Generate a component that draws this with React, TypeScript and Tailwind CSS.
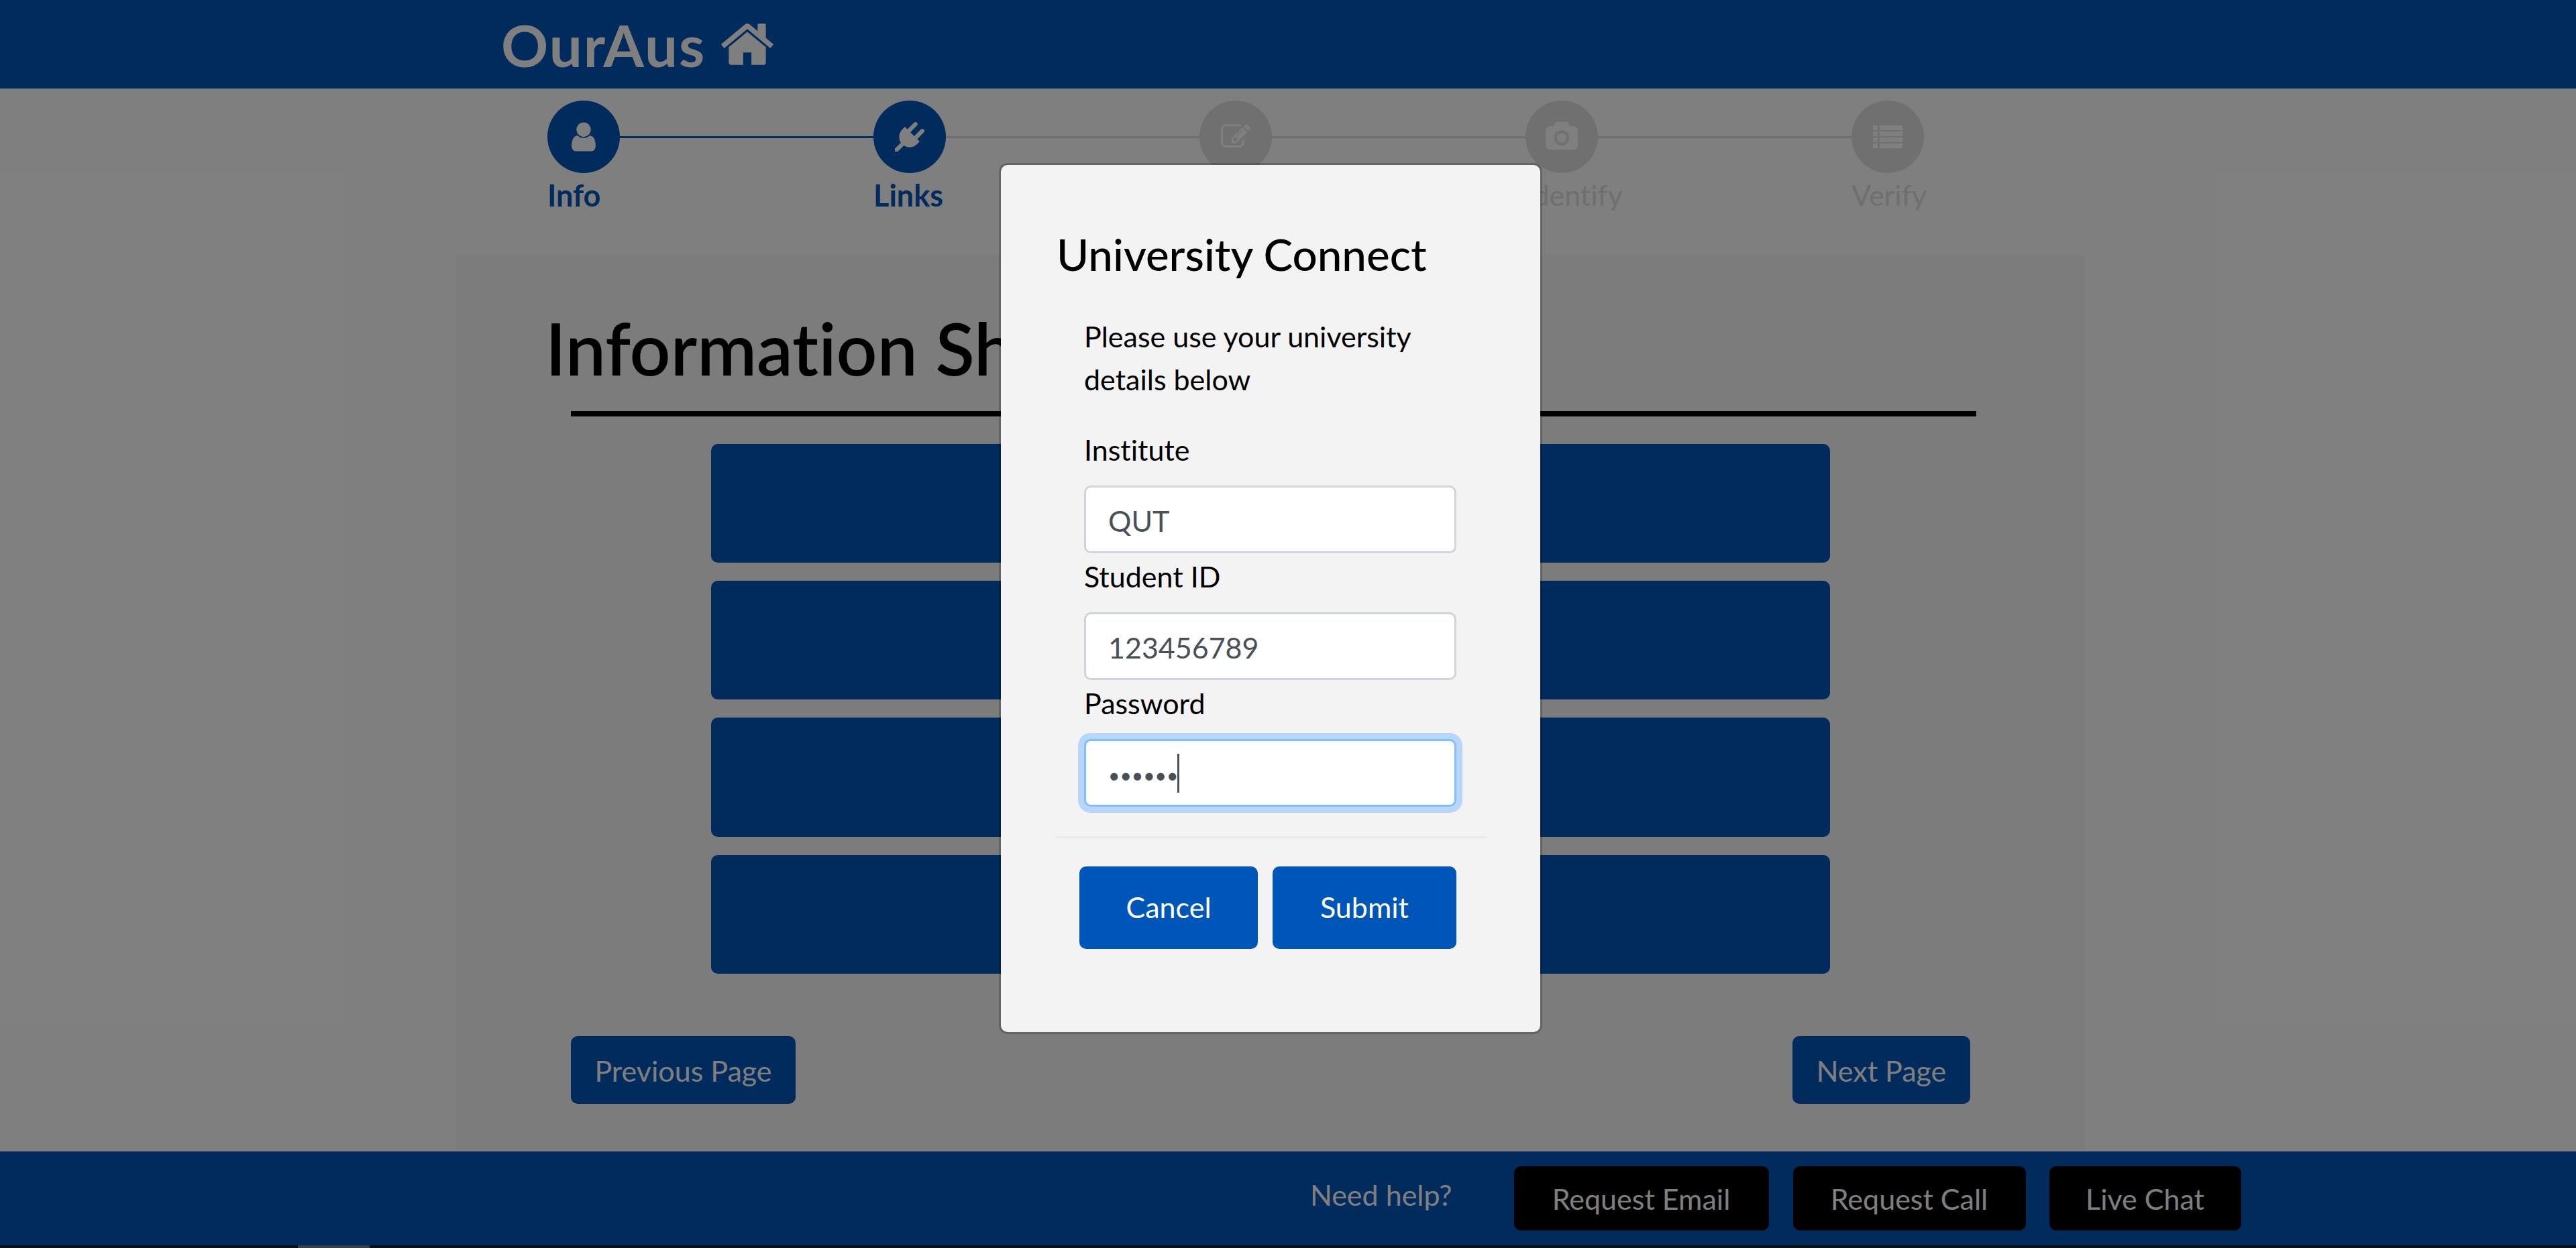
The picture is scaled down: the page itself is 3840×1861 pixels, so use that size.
const steps = [
  { label: "Info", icon: <UserIcon />, active: true },
  { label: "Links", icon: <PlugIcon />, active: true },
  { label: "Details", icon: <EditIcon />, active: false },
  { label: "Identify", icon: <CameraIcon />, active: false },
  { label: "Verify", icon: <ListIcon />, active: false },
];

function HomeIcon() {
  return (
    <svg viewBox="0 0 1792 1792" fill="currentColor" className="ml-[19px] h-[86px] w-[86px]">
      <path d="M1472 992v480q0 26-19 45t-45 19h-384v-384h-256v384h-384q-26 0-45-19t-19-45v-480q0-1 .5-3t.5-3l575-474 575 474q1 2 1 6zm223-69l-62 74q-8 9-21 11h-3q-13 0-21-7l-692-577-692 577q-12 8-24 7-13-2-21-11l-62-74q-8-10-7-23.500t11-21.500l719-599q32-26 76-26t76 26l244 204v-195q0-14 9-23t23-9h192q14 0 23 9t9 23v408l219 182q10 8 11 21.500t-7 23.500z" />
    </svg>
  );
}

function UserIcon() {
  return (
    <svg viewBox="0 0 1792 1792" fill="currentColor" className="h-[50px] w-[50px]">
      <path d="M1536 1399q0 109-62.500 187t-150.500 78h-854q-88 0-150.500-78t-62.500-187q0-85 8.500-160.500t31.500-152 58.500-131 94-89 134.500-34.500q131 128 313 128t313-128q76 0 134.500 34.500t94 89 58.500 131 31.500 152 8.500 160.500zm-256-887q0 159-112.500 271.500t-271.500 112.500-271.500-112.500-112.500-271.500 112.500-271.500 271.500-112.500 271.500 112.500 112.500 271.500z" />
    </svg>
  );
}

function PlugIcon() {
  return (
    <svg viewBox="0 0 1792 1792" fill="currentColor" className="h-[44px] w-[44px]">
      <path d="M1755 453q37 38 37 90.500t-37 90.500l-401 400 150 150-160 160q-163 163-389.500 186.500t-411.500-100.500l-362 362h-181v-181l362-362q-124-185-100.500-411.500t186.500-389.500l160-160 150 150 400-401q38-37 91-37t90 37 37 90.500-37 90.500l-400 401 234 234 401-400q38-37 91-37t90 37z" />
    </svg>
  );
}

function EditIcon() {
  return (
    <svg viewBox="0 0 1792 1792" fill="currentColor" className="h-[44px] w-[44px]">
      <path d="M888 1184l116-116-152-152-116 116v56h96v96h56zm440-720q-16-16-33 1l-350 350q-17 17-1 33t33-1l350-350q17-17 1-33zm80 594v190q0 119-84.500 203.500t-203.500 84.500h-832q-119 0-203.500-84.500t-84.500-203.500v-832q0-119 84.500-203.500t203.500-84.500h832q63 0 117 25 15 7 18 23 3 17-9 29l-49 49q-14 14-32 8-23-6-45-6h-832q-66 0-113 47t-47 113v832q0 66 47 113t113 47h832q66 0 113-47t47-113v-126q0-13 9-22l64-64q15-15 35-7t20 29zm-96-738l288 288-672 672h-288v-288zm444 132l-92 92-288-288 92-92q28-28 68-28t68 28l152 152q28 28 28 68t-28 68z" />
    </svg>
  );
}

function CameraIcon() {
  return (
    <svg viewBox="0 0 1920 1792" fill="currentColor" className="h-[46px] w-[48px]">
      <path d="M960 672q119 0 203.500 84.500t84.500 203.500-84.500 203.500-203.500 84.500-203.500-84.500-84.500-203.500 84.500-203.500 203.500-84.500zm704-416q106 0 181 75t75 181v896q0 106-75 181t-181 75h-1408q-106 0-181-75t-75-181v-896q0-106 75-181t181-75h224l51-136q19-49 69.500-84.500t103.500-35.500h512q53 0 103.500 35.500t69.500 84.500l51 136h224zm-704 1152q185 0 316.500-131.500t131.500-316.500-131.500-316.500-316.500-131.500-316.500 131.500-131.500 316.500 131.500 316.500 316.500 131.500z" />
    </svg>
  );
}

function ListIcon() {
  return (
    <svg viewBox="0 0 44 34" fill="currentColor" className="h-[34px] w-[44px]">
      <rect x="0" y="0" width="7" height="7" />
      <rect x="10" y="0" width="34" height="7" />
      <rect x="0" y="9" width="7" height="7" />
      <rect x="10" y="9" width="34" height="7" />
      <rect x="0" y="18" width="7" height="7" />
      <rect x="10" y="18" width="34" height="7" />
      <rect x="0" y="27" width="7" height="7" />
      <rect x="10" y="27" width="34" height="7" />
    </svg>
  );
}

function Stepper() {
  return (
    <div className="ml-[816px] flex h-[248px] w-[2052px] items-start pt-[18px]">
      {steps.map((step, i) => (
        <div key={step.label} className={i === 4 ? "flex" : "flex flex-1"}>
          <div className="flex w-[108px] shrink-0 flex-col items-start">
            <div
              className={`flex h-[108px] w-[108px] items-center justify-center rounded-full text-white ${
                step.active ? "bg-[#0056b8]" : "bg-[#e0e0e0]"
              }`}
            >
              {step.icon}
            </div>
            <span
              className={`mt-[1px] whitespace-nowrap leading-[64px] ${
                step.active ? "text-[45px] font-bold text-[#0056b8]" : "text-[43px] text-[#dedede]"
              }`}
            >
              {step.label}
            </span>
          </div>
          {i < 4 && (
            <div className={`mt-[53px] h-[3px] flex-1 ${i === 0 ? "bg-[#0056b8]" : "bg-[#dedede]"}`} />
          )}
        </div>
      ))}
    </div>
  );
}

function Field({ label, value, type = "text", focused = false }: { label: string; value: string; type?: string; focused?: boolean }) {
  return (
    <div className="mb-[5px]">
      <div className="-mt-[2px] mb-[21px] text-[43px] leading-[64px] text-black">{label}</div>
      <div className="relative">
        <input
          readOnly
          type={type}
          value={value}
          className={`block h-[101px] w-[555px] rounded-[10px] border-[3px] bg-white px-[33px] pt-[4px] text-[#495057] outline-none ${
            focused ? "border-[#80bdff] text-[30px] shadow-[0_0_0_9px_#b8d6fa]" : "border-[#ced4da] text-[43px]"
          }`}
        />
        {focused && <span className="absolute left-[139px] top-[22px] h-[58px] w-[3px] bg-[#495057]" />}
      </div>
    </div>
  );
}

export default function App() {
  return (
    <div className="relative flex h-[1861px] w-[3840px] flex-col overflow-hidden bg-white font-['Lato',sans-serif] [font-variant-ligatures:none]">
      <header className="flex h-[132px] shrink-0 items-center bg-[#0056b8] pl-[747px] text-white">
        <span className="text-[87px] font-bold leading-none tracking-[2px]">OurAus</span>
        <HomeIcon />
      </header>

      <Stepper />

      <main className="ml-[680px] h-[1334px] w-[2428px] bg-[#f8f8f8] pl-[171px]">
        <h1 className="-ml-[38px] pt-[75px] text-[107px] font-semibold leading-[128px] text-black">Information Sheet</h1>
        <div className="mt-[30px] h-[8px] w-[2095px] bg-black" />
        <div className="ml-[209px] mt-[41px] flex w-[1668px] flex-col gap-[27px]">
          <div className="h-[177px] rounded-[10px] bg-[#0056b8]" />
          <div className="h-[177px] rounded-[10px] bg-[#0056b8]" />
          <div className="h-[178px] rounded-[10px] bg-[#0056b8]" />
          <div className="h-[177px] rounded-[10px] bg-[#0056b8]" />
        </div>
        <div className="mt-[93px] flex w-[2086px] justify-between">
          <button className="h-[101px] w-[335px] rounded-[10px] bg-[#0056b8] pt-[3px] text-[43px] text-white">Previous Page</button>
          <button className="h-[101px] w-[265px] rounded-[10px] bg-[#0056b8] pt-[3px] text-[43px] text-white">Next Page</button>
        </div>
      </main>

      <footer className="mt-[3px] flex h-[140px] shrink-0 items-start bg-[#0056b8] pl-[1953px] pt-[22px] text-white">
        <span className="mr-[92px] mt-[11px] text-[43px] leading-[64px]">Need help?</span>
        <button className="h-[96px] w-[380px] rounded-[10px] bg-black pt-[3px] text-[43px] text-white">Request Email</button>
        <button className="ml-[36px] h-[96px] w-[347px] rounded-[10px] bg-black pt-[3px] text-[43px] text-white">Request Call</button>
        <button className="ml-[35px] h-[96px] w-[286px] rounded-[10px] bg-black pt-[3px] text-[43px] text-white">Live Chat</button>
      </footer>

      <div className="h-[4px] bg-[#141e28] pl-[444px]">
        <div className="h-[4px] w-[107px] bg-[#747e88]" />
      </div>

      {/* backdrop and dialog */}
      <div className="absolute inset-0 bg-black/50 pl-[1489px] pt-[243px]">
        <div className="h-[1299px] w-[810px] rounded-[13px] border-[3px] border-black/20 bg-[#f3f3f3] bg-clip-padding">
          <h5 className="pl-[83px] pt-[94px] text-[65.5px] font-medium leading-[77px] text-black">University Connect</h5>
          <div className="pl-[124px] pt-[53px]">
            <p className="mb-[43px] w-[554px] text-[43px] leading-[64px] text-black">Please use your university details below</p>
            <Field label="Institute" value="QUT" />
            <Field label="Student ID" value="123456789" />
            <Field label="Password" value="123456" type="password" focused />
          </div>
          <div className="ml-[81px] mt-[44px] h-[3px] w-[643px] bg-[#e9ecef]" />
          <div className="ml-[117px] mt-[42px] flex gap-[22px]">
            <button className="h-[123px] w-[266px] rounded-[10px] bg-[#0056b8] text-[43px] text-white">Cancel</button>
            <button className="h-[123px] w-[274px] rounded-[10px] bg-[#0056b8] text-[43px] text-white">Submit</button>
          </div>
        </div>
      </div>
    </div>
  );
}
